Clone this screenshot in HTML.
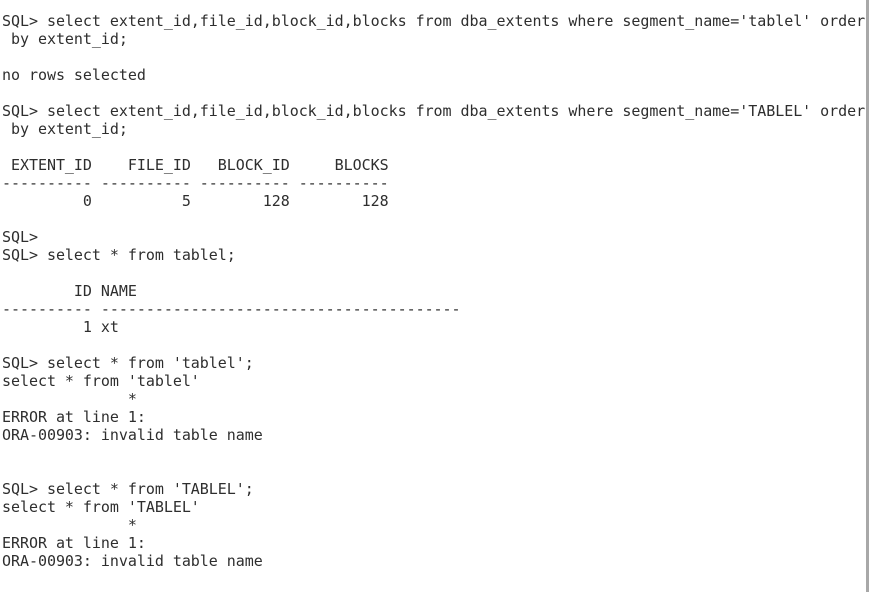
<!DOCTYPE html>
<html><head><style>
html,body{margin:0;padding:0;background:#fff;width:871px;height:592px;overflow:hidden}
pre{position:absolute;left:2px;top:12px;margin:0;font-family:"DejaVu Sans Mono",monospace;font-size:15px;letter-spacing:-0.04px;line-height:18px;color:#2e2e2e}
.sb{position:absolute;left:866px;top:0;width:3px;height:592px;background:#a8a8a8}
</style></head><body>
<pre>SQL&gt; select extent_id,file_id,block_id,blocks from dba_extents where segment_name='tablel' order
 by extent_id;

no rows selected

SQL&gt; select extent_id,file_id,block_id,blocks from dba_extents where segment_name='TABLEL' order
 by extent_id;

 EXTENT_ID    FILE_ID   BLOCK_ID     BLOCKS
---------- ---------- ---------- ----------
         0          5        128        128

SQL&gt;
SQL&gt; select * from tablel;

        ID NAME
---------- ----------------------------------------
         1 xt

SQL&gt; select * from 'tablel';
select * from 'tablel'
              *
ERROR at line 1:
ORA-00903: invalid table name


SQL&gt; select * from 'TABLEL';
select * from 'TABLEL'
              *
ERROR at line 1:
ORA-00903: invalid table name
</pre>
<div class="sb"></div>
</body></html>
